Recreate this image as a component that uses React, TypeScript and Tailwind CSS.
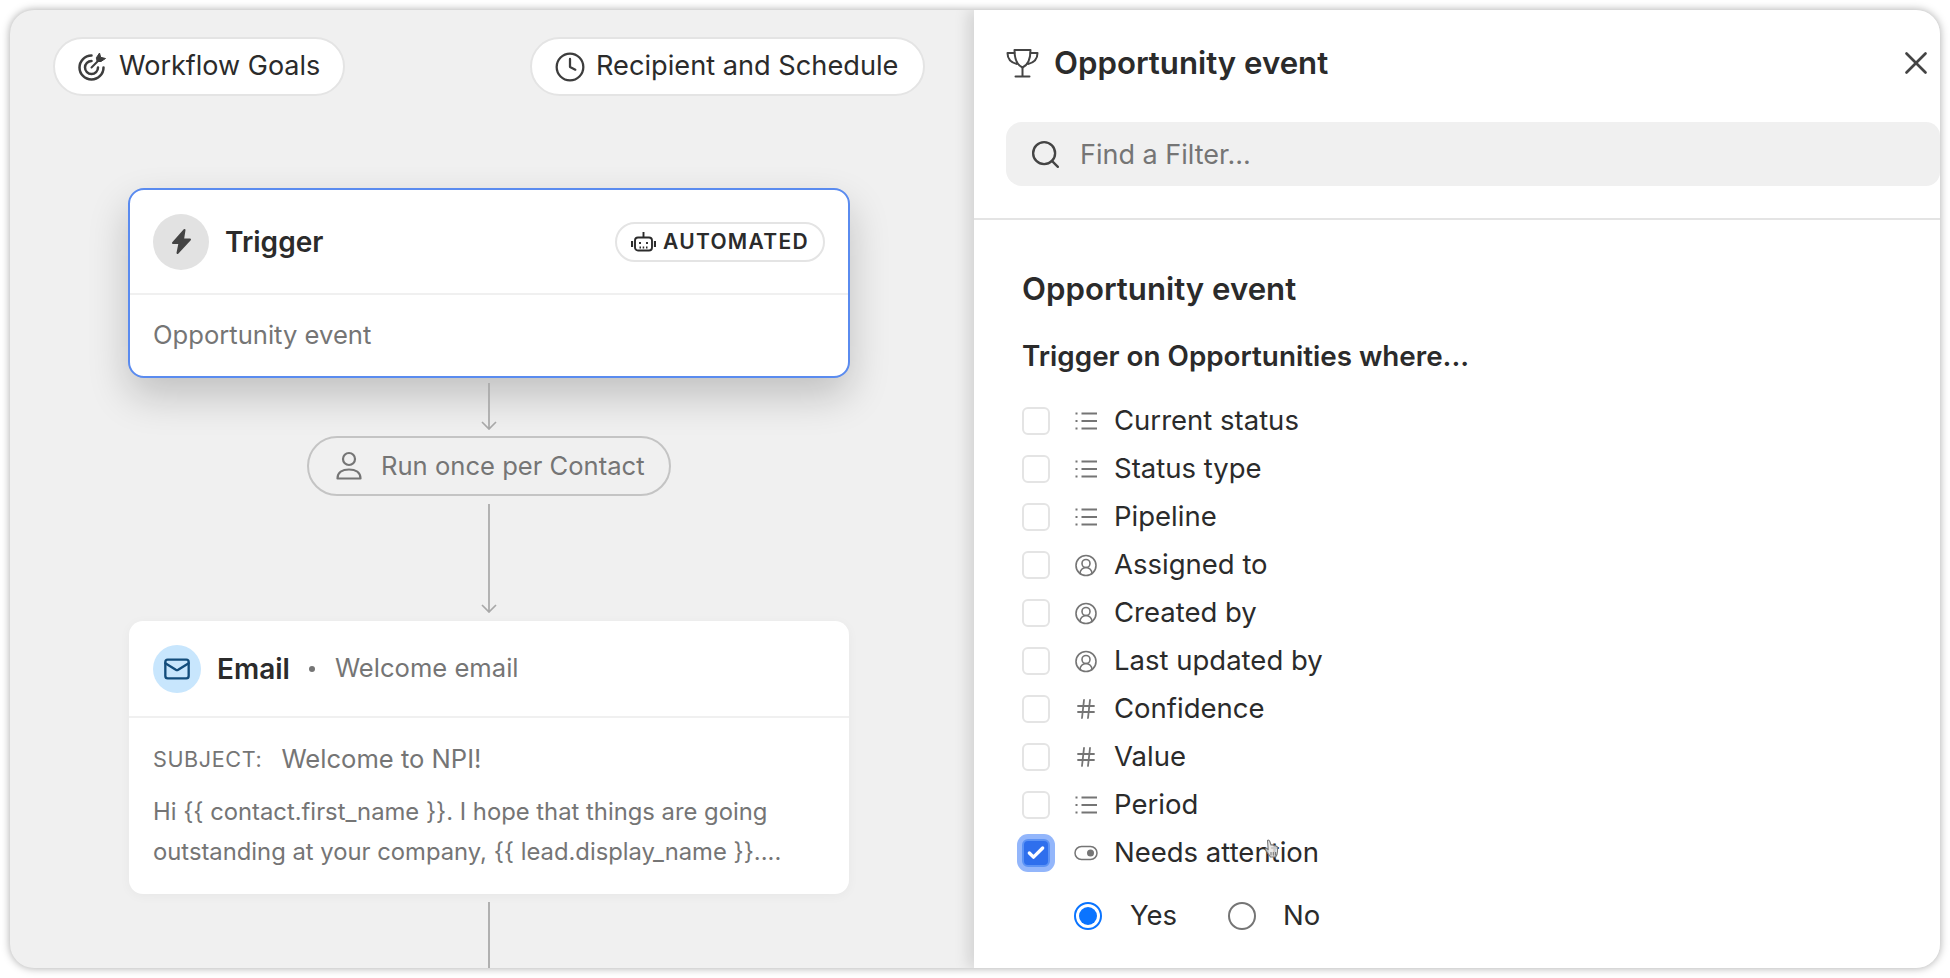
import React from "react";
import { Clock, Search, X, CircleUserRound, Hash, Mail, Check } from "lucide-react";

function Bolt() {
  return (
    <svg width="21" height="27" viewBox="0 0 21 27" fill="#444444" stroke="#444444" strokeWidth="2" strokeLinejoin="round">
      <path d="M13.500 2 2 15h6.500L6.500 25 19 11.500h-7z" />
    </svg>
  );
}

function TargetIcon() {
  return (
    <svg width="29" height="29" viewBox="0 0 29 29" fill="none" stroke="#3d3d3d" strokeWidth="2.500" strokeLinecap="round">
      <path d="M13.500 3.500A12 12 0 1 0 25.500 15.500" />
      <path d="M13.500 9A6.500 6.500 0 1 0 20 15.500" />
      <path d="M13.500 15.500 22 7" strokeWidth="2" />
      <path d="M18.500 5.500 21.500 1l1.200 4.300L27.500 6.500 23 9.500h-3.500z" fill="#3d3d3d" stroke="#3d3d3d" strokeWidth="1" strokeLinejoin="round" />
    </svg>
  );
}

function TrophyIcon() {
  return (
    <svg width="33" height="30" viewBox="0 0 33 30" fill="none" stroke="#444444" strokeWidth="2" strokeLinecap="round" strokeLinejoin="round">
      <path d="M8.500 2h16c0 9-2.500 15-8 17.500C11 17 8.500 11 8.500 2z" />
      <path d="M8.500 5H1.500c0 5 3 9.500 9.500 11M24.500 5h7c0 5-3 9.500-9.500 11" />
      <path d="M16.500 19.500V28M9.500 28.500h14" />
    </svg>
  );
}

function Robot() {
  return (
    <svg width="25" height="21" viewBox="0 0 25 21" fill="none" stroke="#2b2b2b" strokeWidth="1.900">
      <rect x="4" y="6.500" width="17" height="13" rx="3" />
      <path d="M12.500 1v5.500" />
      <path d="M1 10v6M24 10v6" strokeWidth="2.200" />
      <path d="M9 11v2M16 11v2M8.500 16.500h1.500M11.700 16.500h1.500M15 16.500h1.500" />
    </svg>
  );
}

function Person() {
  return (
    <svg width="28" height="30" viewBox="0 0 28 30" fill="none" stroke="#757575" strokeWidth="2.200" strokeLinejoin="round">
      <circle cx="14" cy="8" r="6" />
      <path d="M2.500 27.500c0-6 5-9 11.500-9s11.500 3 11.500 9z" />
    </svg>
  );
}

function ListIcon() {
  return (
    <svg width="22" height="20" viewBox="0 0 22 20" fill="none" stroke="#757575" strokeWidth="1.800">
      <path d="M6.500 2.500H22M6.500 10H22M6.500 17.500H22" />
      <path d="M0.500 2.500h2M0.500 10h2M0.500 17.500h2" strokeWidth="2" />
    </svg>
  );
}

function Toggle() {
  return (
    <svg width="24" height="16" viewBox="0 0 24 16" fill="none">
      <rect x="1" y="1.500" width="22" height="13" rx="6.500" stroke="#757575" strokeWidth="1.500" />
      <circle cx="16.500" cy="8" r="3.500" fill="#757575" />
    </svg>
  );
}

function Arrow({ height }: { height: number }) {
  return (
    <svg width="18" height={height} viewBox={`0 0 18 ${height}`} fill="none" stroke="#a8a8a8" strokeWidth="1.700" className="block">
      <path d={`M9 0V${height - 1}M2 ${height - 8}l7 7 7-7`} />
    </svg>
  );
}

function Hand() {
  return (
    <svg width="18" height="20" viewBox="0 0 18 20" className="absolute left-[149px] top-[7px]" fill="#e4e4e4" fillOpacity="0.85" stroke="#777777" strokeWidth="1.100" strokeLinejoin="round">
      <path d="M4.500 1.500c1.200-.8 2 0 2.500 1.500l1 3 1-.2 1.200.3 1 .5 1.300.2 2 1.200v4.500c0 2.500-1 4.500-2 5.500H7.500L2.500 11c-.7-1.300.5-2 1.700-1.200l1 .8z" />
      <path d="M8 13v3.500M10.300 13v3.500M12.600 13v3.500" />
    </svg>
  );
}

const rows: { label: string; icon: "list" | "user" | "hash" }[] = [
  { label: "Current status", icon: "list" },
  { label: "Status type", icon: "list" },
  { label: "Pipeline", icon: "list" },
  { label: "Assigned to", icon: "user" },
  { label: "Created by", icon: "user" },
  { label: "Last updated by", icon: "user" },
  { label: "Confidence", icon: "hash" },
  { label: "Value", icon: "hash" },
  { label: "Period", icon: "list" },
];

function RowIcon({ icon }: { icon: string }) {
  if (icon === "list") return <ListIcon />;
  if (icon === "user") return <CircleUserRound size={25} strokeWidth={1.6} color="#757575" />;
  return <Hash size={28} strokeWidth={1.8} color="#757575" />;
}

export default function App() {
  return (
    <div className="w-[1950px] h-[978px] bg-white p-[10px] font-['Inter',sans-serif] overflow-hidden">
      <div className="flex w-[1930px] h-[958px] rounded-[24px] overflow-hidden bg-[#f0f0f0] shadow-[0_0_8px_rgba(0,0,0,0.35)]">
        {/* Canvas */}
        <div className="w-[964px] h-full shrink-0 flex flex-col">
          <div className="flex pl-[43px] pt-[27px] gap-[185px]">
            <div className="h-[59px] w-[292px] rounded-full bg-white border-2 border-[#e4e4e4] flex items-center pl-[23px] gap-[12px] text-[27px] text-[#2b2b2b]">
              <TargetIcon />
              <span>Workflow Goals</span>
            </div>
            <div className="h-[59px] w-[395px] rounded-full bg-white border-2 border-[#e4e4e4] flex items-center pl-[22px] gap-[10px] text-[27.2px] text-[#2b2b2b]">
              <Clock size={32} color="#3d3d3d" strokeWidth={1.7} />
              <span>Recipient and Schedule</span>
            </div>
          </div>

          <div className="ml-[118px] w-[722px] flex flex-col items-center mt-[92px]">
            <div className="w-full h-[190px] rounded-[16px] border-2 border-[#5a8bef] bg-white flex flex-col shadow-[0_18px_40px_rgba(0,0,0,0.2)]">
              <div className="h-[105px] shrink-0 border-b-2 border-[#f0f0f0] flex items-center pl-[23px] pr-[23px]">
                <div className="w-[56px] h-[56px] rounded-full bg-[#e2e2e2] flex items-center justify-center">
                  <Bolt />
                </div>
                <span className="ml-[16px] text-[28px] font-semibold text-[#2b2b2b]">Trigger</span>
                <div className="ml-auto h-[40px] w-[210px] rounded-full border-2 border-[#e4e4e4] flex items-center pl-[14px] gap-[7px]">
                  <Robot />
                  <span className="text-[21px] font-semibold tracking-[1.3px] text-[#2b2b2b]">AUTOMATED</span>
                </div>
              </div>
              <div className="flex-1 flex items-center pl-[23px] text-[25.6px] text-[#757575]">Opportunity event</div>
            </div>

            <div className="mt-[5px]"><Arrow height={47} /></div>
            <div className="mt-[6px] h-[60px] w-[364px] rounded-full border-2 border-[#c4c4c4] flex items-center pl-[26px] gap-[18px] text-[25.6px] text-[#757575]">
              <Person />
              <span>Run once per Contact</span>
            </div>
            <div className="mt-[8px]"><Arrow height={109} /></div>

            <div className="mt-[8px] w-[720px] h-[273px] rounded-[14px] bg-white flex flex-col shadow-[0_2px_12px_rgba(0,0,0,0.04)]">
              <div className="h-[97px] shrink-0 border-b-2 border-[#f0f0f0] flex items-center pl-[24px]">
                <div className="w-[48px] h-[48px] rounded-full bg-[#c8e6fd] flex items-center justify-center">
                  <Mail size={28} color="#134d7c" strokeWidth={2} />
                </div>
                <span className="ml-[16px] text-[28px] font-semibold text-[#2b2b2b]">Email</span>
                <span className="ml-[19px] w-[6px] h-[6px] rounded-full bg-[#757575]" />
                <span className="ml-[20px] text-[25.6px] text-[#757575]">Welcome email</span>
              </div>
              <div className="flex-1 pl-[24px] pt-[23px]">
                <div className="flex items-center h-[36px]">
                  <span className="text-[21.6px] tracking-[0.6px] text-[#757575]">SUBJECT:</span>
                  <span className="ml-[19px] text-[25.6px] text-[#757575]">Welcome to NPI!</span>
                </div>
                <p className="mt-[15px] text-[23.8px] leading-[40px] text-[#757575] whitespace-nowrap">
                  Hi {"{{ contact.first_name }}"}. I hope that things are going
                  <br />
                  outstanding at your company, {"{{ lead.display_name }}"}....
                </p>
              </div>
            </div>

            <div className="mt-[8px] w-[2px] h-[70px] bg-[#b0b0b0]" />
          </div>
        </div>

        {/* Right panel */}
        <div className="flex-1 min-w-0 bg-white flex flex-col shadow-[-6px_0_14px_rgba(0,0,0,0.12)] relative">
          <div className="flex items-center h-[84px] pl-[32px] pt-[22px] pr-[5px]">
            <TrophyIcon />
            <span className="ml-[15px] text-[31.2px] font-semibold text-[#2b2b2b]">Opportunity event</span>
            <X size={38} strokeWidth={1.7} color="#444444" className="ml-auto" />
          </div>
          <div className="ml-[32px] mt-[28px] h-[64px] rounded-l-[16px] rounded-r-[14px] bg-[#f0f0f0] flex items-center pl-[23px] gap-[18px] text-[27px] text-[#757575]">
            <Search size={33} strokeWidth={1.7} color="#444444" />
            <span className="pt-[2px]">Find a Filter...</span>
          </div>
          <div className="mt-[32px] h-[2px] bg-[#e4e4e4]" />
          <div className="pl-[48px]">
            <h2 className="mt-[51px] text-[31.2px] leading-[36px] font-semibold text-[#2b2b2b]">Opportunity event</h2>
            <h3 className="mt-[33px] text-[27.8px] leading-[32px] font-semibold text-[#2b2b2b]">Trigger on Opportunities where...</h3>
            <div className="mt-[25px] flex flex-col">
              {rows.map((r) => (
                <div key={r.label} className="h-[48px] flex items-center">
                  <div className="w-[28px] h-[28px] rounded-[6px] border-2 border-[#e4e4e4] bg-white" />
                  <div className="ml-[24px] w-[24px] flex justify-center"><RowIcon icon={r.icon} /></div>
                  <span className="ml-[16px] text-[27.5px] text-[#2b2b2b]">{r.label}</span>
                </div>
              ))}
              <div className="h-[48px] flex items-center relative">
                <div className="w-[28px] h-[28px] rounded-[6px] bg-[#2f6fed] border-2 border-[#5c93f5] flex items-center justify-center shadow-[0_0_0_5px_#93b6fb]">
                  <Check size={20} strokeWidth={4} color="#ffffff" />
                </div>
                <div className="ml-[24px] w-[24px] flex justify-center"><Toggle /></div>
                <span className="ml-[16px] text-[27.5px] text-[#2b2b2b] relative">
                  Needs attention
                  <Hand />
                </span>
              </div>
            </div>
            <div className="mt-[15px] flex items-center ml-[52px] h-[48px] text-[27.5px] text-[#2b2b2b]">
              <div className="w-[28px] h-[28px] rounded-full border-2 border-[#0a74ff] flex items-center justify-center">
                <div className="w-[18px] h-[18px] rounded-full bg-[#0a74ff]" />
              </div>
              <span className="ml-[28px]">Yes</span>
              <div className="ml-[51px] w-[28px] h-[28px] rounded-full border-2 border-[#757575]" />
              <span className="ml-[27px]">No</span>
            </div>
          </div>
        </div>
      </div>
    </div>
  );
}
